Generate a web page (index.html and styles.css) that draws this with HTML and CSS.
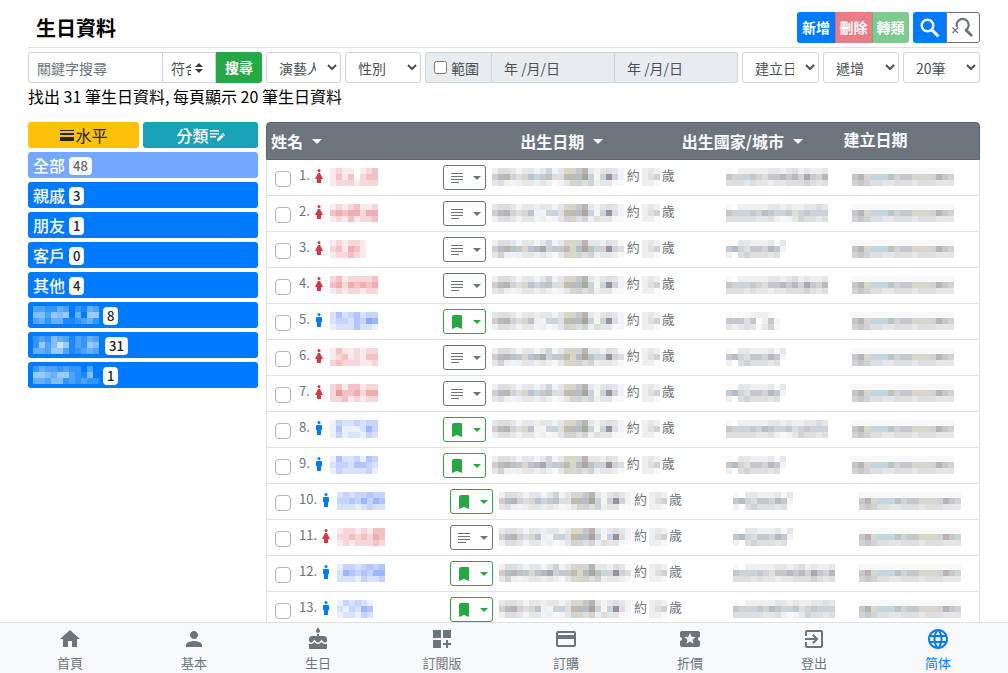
FILE: index.html
```html
<!DOCTYPE html>
<html lang="zh-Hant">
<head>
<meta charset="utf-8">
<meta name="viewport" content="width=device-width, initial-scale=1">
<title>生日資料</title>
<link rel="stylesheet" href="styles.css">
</head>
<body>
<main class="page">
  <header class="page-head">
    <h1>生日資料</h1>
    <div class="btn-group actions">
      <button type="button" class="btn primary">新增</button>
      <button type="button" class="btn danger" disabled>刪除</button>
      <button type="button" class="btn success" disabled>轉類</button>
    </div>
    <div class="btn-group tools">
      <button type="button" class="btn primary" aria-label="搜尋"><svg width="24" height="24" viewBox="0 0 24 24" fill="none" stroke="currentColor"><circle cx="9.500" cy="9.500" r="5.800" stroke-width="2.400"/><path stroke-width="3" d="M14 14l6.500 6.500"/></svg></button>
      <button type="button" class="btn outline" aria-label="清除搜尋"><svg width="26" height="24" viewBox="0 0 26 24" fill="none" stroke="currentColor"><path stroke-width="2.200" d="M7 11A6 6 0 1 1 15 14.500"/><path stroke-width="2.800" d="M16 14l6 6"/><path stroke-width="1.200" d="M2.500 11.500l5.500 5.500M8 11.500l-5.500 5.500"/></svg></button>
    </div>
  </header>

  <form class="filters">
    <div class="group keyword">
      <input type="text" class="control" placeholder="關鍵字搜尋" aria-label="關鍵字搜尋">
      <select class="control stepper" aria-label="比對方式"><option>符合</option></select>
      <button type="button" class="btn search">搜尋</button>
    </div>
    <select class="control" aria-label="演藝人"><option>演藝人員</option></select>
    <select class="control" aria-label="性別"><option>性別</option></select>
    <div class="group range">
      <label class="range-label"><input type="checkbox"><span>範圍</span></label>
      <input type="text" class="control" value="年 /月/日" disabled aria-label="開始日期">
      <input type="text" class="control" value="年 /月/日" disabled aria-label="結束日期">
    </div>
    <select class="control" aria-label="排序"><option>建立日期</option></select>
    <select class="control" aria-label="次序"><option>遞增</option></select>
    <select class="control" aria-label="每頁筆數"><option>20筆</option></select>
  </form>
  <p class="summary">找出 31 筆生日資料, 每頁顯示 20 筆生日資料</p>

  <div class="columns">
    <aside class="side">
      <div class="side-top">
        <button type="button" class="side-btn warning"><svg width="16" height="16" viewBox="0 0 16 16" fill="currentColor"><path d="M1 3h14v1H1zM1 6h14v2H1zM1 10h14v4H1z"/></svg>水平</button>
        <button type="button" class="side-btn info">分類<svg width="16" height="16" viewBox="0 0 16 16" fill="currentColor"><path d="M1 3h9v1.500H1zM1 6h9v1.500H1zM1 9h6v1.500H1zM8 12l4.500-4.500 2 2L10 14H8zM13 7l1-1 2 2-1 1z"/></svg></button>
      </div>
      <button type="button" class="side-btn cat" disabled>全部 <span class="badge">48</span></button>
      <button type="button" class="side-btn cat">親戚 <span class="badge">3</span></button>
      <button type="button" class="side-btn cat">朋友 <span class="badge">1</span></button>
      <button type="button" class="side-btn cat">客戶 <span class="badge">0</span></button>
      <button type="button" class="side-btn cat">其他 <span class="badge">4</span></button>
      <button type="button" class="side-btn cat"><span class="mosaic" data-tint="#ffffff" data-rows="33224302143|55365604066|34244112342"></span><span class="badge">8</span></button>
      <button type="button" class="side-btn cat wide"><span class="mosaic" data-tint="#ffffff" data-rows="23254313243|26358613265|44366312343"></span><span class="badge">31</span></button>
      <button type="button" class="side-btn cat"><span class="mosaic" data-tint="#ffffff" data-rows="24332322030|66546632150|44355232322"></span><span class="badge">1</span></button>
    </aside>

    <table class="list">
      <thead>
        <tr>
          <th><button type="button" class="sort">姓名<i class="caret"></i></button></th>
          <th><button type="button" class="sort">出生日期<i class="caret"></i></button></th>
          <th><button type="button" class="sort">出生國家/城市<i class="caret"></i></button></th>
          <th class="plain">建立日期</th>
        </tr>
      </thead>
      <tbody id="people"></tbody>
    </table>
  </div>
</main>

<nav class="tabs">
  <a href="#"><svg viewBox="0 0 24 24"><path d="M10 20v-6h4v6h5v-8h3L12 3 2 12h3v8z"/></svg>首頁</a>
  <a href="#"><svg viewBox="0 0 24 24"><path d="M12 12c2.210 0 4-1.790 4-4s-1.790-4-4-4-4 1.790-4 4 1.790 4 4 4zm0 2c-2.670 0-8 1.340-8 4v2h16v-2c0-2.660-5.330-4-8-4z"/></svg>基本</a>
  <a href="#"><svg viewBox="0 0 24 24"><path d="M12 6c1.110 0 2-.9 2-2 0-.38-.1-.73-.29-1.030L12 0l-1.710 2.970c-.19.3-.29.65-.29 1.030 0 1.100.9 2 2 2zm4.600 9.990l-1.070-1.070-1.080 1.070c-1.300 1.300-3.580 1.310-4.890 0l-1.070-1.070-1.090 1.070C6.750 16.640 5.880 17 4.960 17c-.73 0-1.400-.23-1.960-.61V21c0 .55.45 1 1 1h16c.55 0 1-.45 1-1v-4.610c-.56.38-1.230.61-1.960.61-.92 0-1.790-.36-2.440-1.010zM18 9h-5V7h-2v2H6c-1.660 0-3 1.340-3 3v1.540c0 1.080.88 1.960 1.960 1.960.52 0 1.020-.2 1.380-.57l2.140-2.130 2.130 2.130c.74.74 2.030.74 2.770 0l2.140-2.130 2.130 2.130c.37.37.86.57 1.380.57 1.080 0 1.960-.88 1.960-1.960V12C21 10.340 19.660 9 18 9z"/></svg>生日</a>
  <a href="#"><svg viewBox="0 0 24 24"><path d="M3 3h8v8H3zM13 3h8v8h-8zM3 13h8v8H3zM18 13h-2v3h-3v2h3v3h2v-3h3v-2h-3z"/></svg>訂閱版</a>
  <a href="#"><svg viewBox="0 0 24 24"><path d="M20 4H4c-1.110 0-1.990.89-1.990 2L2 18c0 1.110.89 2 2 2h16c1.110 0 2-.89 2-2V6c0-1.110-.89-2-2-2zm0 14H4v-6h16v6zm0-10H4V6h16v2z"/></svg>訂購</a>
  <a href="#"><svg viewBox="0 0 24 24"><path d="M20 12c0-1.100.9-2 2-2V6c0-1.100-.9-2-2-2H4c-1.100 0-1.990.9-1.990 2v4c1.100 0 1.990.9 1.990 2s-.89 2-2 2v4c0 1.100.9 2 2 2h16c1.100 0 2-.9 2-2v-4c-1.100 0-2-.9-2-2zm-4.420 4.800L12 14.500l-3.580 2.300 1.080-4.120-3.290-2.690 4.240-.25L12 5.800l1.540 3.950 4.240.25-3.290 2.690 1.090 4.110z"/></svg>折價</a>
  <a href="#"><svg viewBox="0 0 24 24"><path d="M10.090 15.590L11.500 17l5-5-5-5-1.410 1.410L12.670 11H3v2h9.670l-2.580 2.590zM19 3H5c-1.110 0-2 .9-2 2v4h2V5h14v14H5v-4H3v4c0 1.100.89 2 2 2h14c1.100 0 2-.9 2-2V5c0-1.100-.9-2-2-2z"/></svg>登出</a>
  <a href="#" class="active"><svg viewBox="0 0 24 24"><path d="M11.990 2C6.470 2 2 6.480 2 12s4.470 10 9.990 10C17.520 22 22 17.520 22 12S17.520 2 11.990 2zm6.930 6h-2.950a15.650 15.650 0 0 0-1.380-3.560A8.030 8.030 0 0 1 18.920 8zM12 4.040c.83 1.200 1.480 2.530 1.910 3.960h-3.820c.43-1.430 1.080-2.760 1.910-3.960zM4.260 14C4.100 13.360 4 12.690 4 12s.1-1.360.26-2h3.380c-.08.66-.14 1.320-.14 2s.06 1.340.14 2H4.260zm.82 2h2.950c.32 1.250.78 2.450 1.380 3.560A7.990 7.990 0 0 1 5.080 16zm2.950-8H5.080a7.990 7.990 0 0 1 4.330-3.560A15.650 15.650 0 0 0 8.030 8zM12 19.960c-.83-1.200-1.480-2.530-1.910-3.960h3.820c-.43 1.430-1.080 2.760-1.910 3.960zM14.340 14H9.660c-.09-.66-.16-1.320-.16-2s.07-1.350.16-2h4.680c.09.65.16 1.320.16 2s-.07 1.340-.16 2zm.25 5.560c.6-1.110 1.060-2.310 1.380-3.560h2.950a8.030 8.030 0 0 1-4.330 3.560zM16.360 14c.08-.66.14-1.320.14-2s-.06-1.340-.14-2h3.380c.16.64.26 1.310.26 2s-.1 1.360-.26 2h-3.380z"/></svg>简体</a>
</nav>
<script src="app.js"></script>
</body>
</html>
```
FILE: styles.css
```css
* { box-sizing: border-box; }

body {
  margin: 0;
  height: 100vh;
  display: flex;
  flex-direction: column;
  background: #fff;
  color: #000;
  font-family: "Noto Sans CJK TC", "Noto Sans", sans-serif;
  font-size: 16px;
  line-height: 24px;
}

button, input, select { font-family: inherit; margin: 0; }
svg { display: block; flex: none; }

.page {
  flex: 1;
  min-height: 0;
  overflow-y: auto;
  scrollbar-width: none;
  padding: 12px 28px 0;
}

.page-head {
  display: flex;
  gap: 4px;
  padding-bottom: 4px;
  border-bottom: 1px solid #dee2e6;
}
h1 {
  flex: 1;
  margin: 0;
  padding-left: 8px;
  font-size: 20px;
  line-height: 31px;
  font-weight: 700;
}

.btn-group { display: flex; }
.btn {
  display: flex;
  align-items: center;
  justify-content: center;
  height: 31px;
  padding: 0 0 2px;
  border: 1px solid transparent;
  border-radius: 3px;
  color: #fff;
  font-size: 14px;
  line-height: 20px;
  font-weight: 700;
  white-space: nowrap;
}
.btn-group .btn:not(:last-child) { border-top-right-radius: 0; border-bottom-right-radius: 0; }
.btn-group .btn:not(:first-child) { border-top-left-radius: 0; border-bottom-left-radius: 0; }
.actions .btn { width: 38px; }
.actions .btn + .btn { width: 37px; }
.tools .btn { width: 34px; padding: 0; }
.tools .btn:first-child { width: 33px; }
.primary { background: #007bff; }
.danger { background: #ea7c87; border-left-color: #cf6570; }
.success { background: #7eca8f; border-left-color: #68b079; }
.outline { background: #fff; border-color: #6c757d; color: #6c757d; }

.filters {
  display: grid;
  grid-template-columns: minmax(0, 234fr) minmax(0, 75fr) minmax(0, 76fr) minmax(0, 313fr) minmax(0, 77fr) minmax(0, 76fr) minmax(0, 77fr);
  gap: 4px;
  margin-top: 4px;
}
.control {
  width: 100%;
  min-width: 0;
  height: 31px;
  padding: 4px 8px;
  border: 1px solid #ced4da;
  border-radius: 3px;
  background-color: #fff;
  color: #495057;
  font-size: 14px;
}
.control::placeholder { color: #6c757d; opacity: 1; }
.group { display: flex; }
.group > .control { border-radius: 0; }
.group.keyword input { flex: 1; border-radius: 3px 0 0 3px; }
.keyword .stepper {
  flex: none;
  width: 53px;
  border-left: 0;
  padding: 4px 24px 4px 8px;
  appearance: none;
  background: #fff url("data:image/svg+xml,%3csvg xmlns='http://www.w3.org/2000/svg' width='8' height='10' viewBox='0 0 4 5'%3e%3cpath fill='%23343a40' d='M2 0L0 2h4zm0 5L0 3h4z'/%3e%3c/svg%3e") no-repeat right 12px center;
}
.search { flex: none; width: 46px; background: #28a745; border-radius: 0 3px 3px 0; }
.range-label {
  display: flex;
  align-items: center;
  gap: 4px;
  flex: none;
  width: 67px;
  padding-left: 8px;
  border: 1px solid #ced4da;
  border-radius: 3px 0 0 3px;
  background: #e9ecef;
  color: #495057;
  font-size: 14px;
}
.range-label input { width: 13px; height: 13px; }
.range .control {
  flex: 1;
  border-left: 0;
  padding-left: 12px;
  background: #e9ecef;
}
.group.range .control:last-child { border-radius: 0 3px 3px 0; }

.summary { margin: 1px 0 14px; }

.columns { display: flex; gap: 8px; align-items: flex-start; }

.side {
  flex: none;
  width: 230px;
  display: flex;
  flex-direction: column;
  gap: 4px;
}
.side-top { display: flex; gap: 4px; }
.side-btn {
  display: flex;
  align-items: center;
  height: 26px;
  padding: 0 5px;
  border: 0;
  border-radius: 3px;
  color: #fff;
  font-size: 16px;
  line-height: 24px;
  font-weight: 500;
}
.side-top .side-btn { justify-content: center; }
.warning { width: 111px; background: #ffc107; color: #212529; font-weight: 400; }
.info { flex: 1; background: #17a2b8; }
.cat { gap: 4px; background: #007bff; }
.cat.wide { gap: 6px; }
.cat:disabled { background: #72a9ff; }
.cat:disabled .badge { color: #666; }
.badge {
  height: 18px;
  margin-top: 2px;
  padding: 0 4px;
  border-radius: 4px;
  background: #f8f9fa;
  color: #212529;
  font-size: 13px;
  line-height: 18px;
}

.list { flex: 1; min-width: 0; display: block; color: #6c757d; }
.list thead, .list tbody { display: block; }
.list thead tr {
  display: grid;
  grid-template-columns: 250fr 162fr 162fr 140fr;
  height: 38px;
  border: 1px solid #5c646c;
  border-radius: 4px 4px 0 0;
  background: #6c757d;
}
.list th {
  padding: 6px 0 0 4px;
  text-align: left;
  color: #f8f9fa;
  font-size: 16px;
  line-height: 24px;
  white-space: nowrap;
}
.list th.plain { padding-top: 4px; }
.sort {
  display: flex;
  align-items: center;
  gap: 9px;
  padding: 0;
  border: 0;
  background: none;
  color: inherit;
  font-size: 16px;
  line-height: 24px;
  font-weight: 700;
}
.caret {
  border: 5px solid transparent;
  border-top-color: currentColor;
  border-bottom: 0;
}
.list tbody tr {
  display: flex;
  align-items: center;
  height: 36px;
  border: 1px solid #dee2e6;
  border-top: 0;
}
.list td { display: flex; align-items: center; flex: none; padding: 0; font-size: 13px; line-height: 20px; }
.list td.pick { gap: 8px; padding-left: 8px; }
.pick label, .born .text { margin-bottom: 5px; }
.name > svg:first-child { margin-bottom: 3px; }
.pick input {
  appearance: none;
  width: 16px;
  height: 16px;
  margin-top: 2px;
  border: 1px solid #adb5bd;
  border-radius: 4px;
  background: #fff;
}
.list td.name { width: 133px; padding-left: 5px; gap: 7px; }
.man { color: #007bff; }
.woman { color: #dc3545; }
.list td.born { width: 283px; }
.born .dates { margin: 0 3px 0 6px; }
.born .age { margin: 0 2px; }
.list td.city { width: 126px; }
.mosaic { display: block; flex: none; }
.list .mosaic { margin-bottom: 1px; }

.menu {
  display: flex;
  align-items: center;
  gap: 10px;
  width: 43px;
  height: 25px;
  padding: 0 4px 0 7px;
  border: 1px solid #6c757d;
  border-radius: 3px;
  background: #fff;
  color: #6c757d;
}
.menu .caret { border-width: 4px; border-bottom: 0; }
.menu.saved { border-color: #28a745; color: #28a745; }

.tabs {
  flex: none;
  display: grid;
  grid-template-columns: repeat(8, 1fr);
  height: 51px;
  padding: 4px 8px 0;
  border-top: 1px solid #dee2e6;
  background: #f8f9fa;
}
.tabs a {
  display: flex;
  flex-direction: column;
  align-items: center;
  gap: 2px;
  color: #6c757d;
  font-size: 13px;
  line-height: 20px;
  text-decoration: none;
}
.tabs svg { width: 24px; height: 24px; fill: currentColor; }
.tabs .active { color: #007bff; font-family: "Noto Sans CJK SC", sans-serif; }
```
FILE: app.js
```javascript
// Names and private details are shown as blocks of 6px cells.
const CELL = 6;
const TONES = {
  1: '#f8f8f8', 2: '#efefef', 3: '#e5e6e7', 4: '#dcdee0', 5: '#d0d3d6', 6: '#c4c7cb', 7: '#b6babf', 8: '#a6aab0',
  b: '#b4bcc8', p: '#d8caca', r: '#bcb2b0', y: '#d8d6c8', k: '#aaa596', t: '#c2bba8', l: '#f0f4f9',
  c: '#c3d6df', m: '#9c8f9f', w: '#fbf4e8', g: '#b9c5c3', v: '#bbc0d2'
};

function mosaic(rows, tint, name = '') {
  const lines = rows.split('|');
  const width = lines[0].length * CELL;
  let cells = '';
  lines.forEach((line, y) => [...line].forEach((ch, x) => {
    if (ch === '0') return;
    const fill = tint ? `fill="${tint}" fill-opacity="${(ch * 0.1).toFixed(1)}"` : `fill="${TONES[ch]}"`;
    cells += `<rect x="${x * CELL}" y="${y * CELL}" width="${CELL}" height="${CELL}" ${fill}/>`;
  }));
  return `<svg class="mosaic ${name}" width="${width}" height="${lines.length * CELL}" shape-rendering="crispEdges" aria-hidden="true">${cells}</svg>`;
}

const MAN = '<svg class="man" width="8" height="14" viewBox="0 0 8 14" fill="currentColor"><circle cx="4" cy="1.500" r="1.500"/><path d="M2 4h4a1 1 0 0 1 1 1v4H6v5H2V9H1V5a1 1 0 0 1 1-1z"/></svg>';
const WOMAN = '<svg class="woman" width="8" height="14" viewBox="0 0 8 14" fill="currentColor"><circle cx="4" cy="1.500" r="1.500"/><path d="M3 4h2l3 6H6v4H2v-4H0z"/></svg>';
const NOTE = '<svg width="12" height="12" viewBox="0 0 12 12" stroke="currentColor"><path d="M0 1.500h12M0 4.500h12M0 7.500h12M0 10.500h8"/></svg>';
const MARK = '<svg width="12" height="14" viewBox="0 0 12 14" fill="currentColor"><path d="M1 2a2 2 0 0 1 2-2h7a1 1 0 0 1 1 1v13L6 12l-5 2z"/></svg>';

const DATES = [
  '2443l33l35l3yy6r3l343l|pbr54yvc6g44t7bkcwcm5l|342l2332321l3y54523311',
  '3443l33233l3yy6r3l343l|pbr54yv2l5c4t7bkcwcm4l|2443l33l21l35y45243311',
  '2443l33l35l3yy5r332431|pbrg6yv78566tybkgc5m54|352l23323213yy54523321'
];
const CITIES = [
  '10222223323423223|655c6546676758657|44434332334445434',
  '10222223323223343|655c65b65c64565c5|4444433421l354434',
  '10332223130|6b5466576l0|20454443400'
];
const SHORT_CITY = '1011222100|66646026l0|3234313510';
const MADE = '11111111111111111|6rycccg566yyy5r65|56544334443444333';

const PEOPLE = [
  { sex: 'f', name: '12110123|13130233|12221222', date: 0, city: CITIES[0] },
  { sex: 'f', name: '12123112|34344244|12131223', date: 1, city: CITIES[1] },
  { sex: 'f', name: '121221|231431|122321', date: 2, city: CITIES[2] },
  { sex: 'f', name: '23122223|34243434|12122122', date: 0, city: CITIES[0] },
  { sex: 'm', name: '24234233|23324365|12224221', date: 1, city: SHORT_CITY },
  { sex: 'f', name: '13112122|12312133|23222112', date: 2, city: CITIES[2] },
  { sex: 'f', name: '23133122|25334244|22312122', date: 0, city: CITIES[2] },
  { sex: 'm', name: '13223233|14111253|13122132', date: 1, city: CITIES[1] },
  { sex: 'm', name: '14223143|23324432|13222231', date: 2, city: CITIES[2] },
  { sex: 'm', name: '23233433|33435354|22212322', date: 0, city: CITIES[2] },
  { sex: 'f', name: '12212133|22323243|12122232', date: 1, city: CITIES[2] },
  { sex: 'm', name: '13323434|25434355|22213223', date: 2, city: CITIES[0] },
  { sex: 'm', name: '132321|213254|122132', date: 1, city: CITIES[1] }
];

document.getElementById('people').innerHTML = PEOPLE.map((p, i) => {
  const female = p.sex === 'f';
  const n = i + 1;
  return `<tr>
    <td class="pick"><input type="checkbox" id="p${n}"><label for="p${n}">${n}.</label></td>
    <td class="name">${female ? WOMAN : MAN}${mosaic(p.name, female ? '#d8303c' : '#3a6cff')}</td>
    <td class="born"><button type="button" class="menu${female ? '' : ' saved'}" aria-label="選單">${female ? NOTE : MARK}<i class="caret"></i></button>${mosaic(DATES[p.date], '', 'dates')}<span class="text">約</span>${mosaic('232|245|221', '', 'age')}<span class="text">歲</span></td>
    <td class="city">${mosaic(p.city)}</td>
    <td>${mosaic(MADE)}</td>
  </tr>`;
}).join('');

document.querySelectorAll('span.mosaic').forEach(el => {
  el.innerHTML = mosaic(el.dataset.rows, el.dataset.tint);
});
```
